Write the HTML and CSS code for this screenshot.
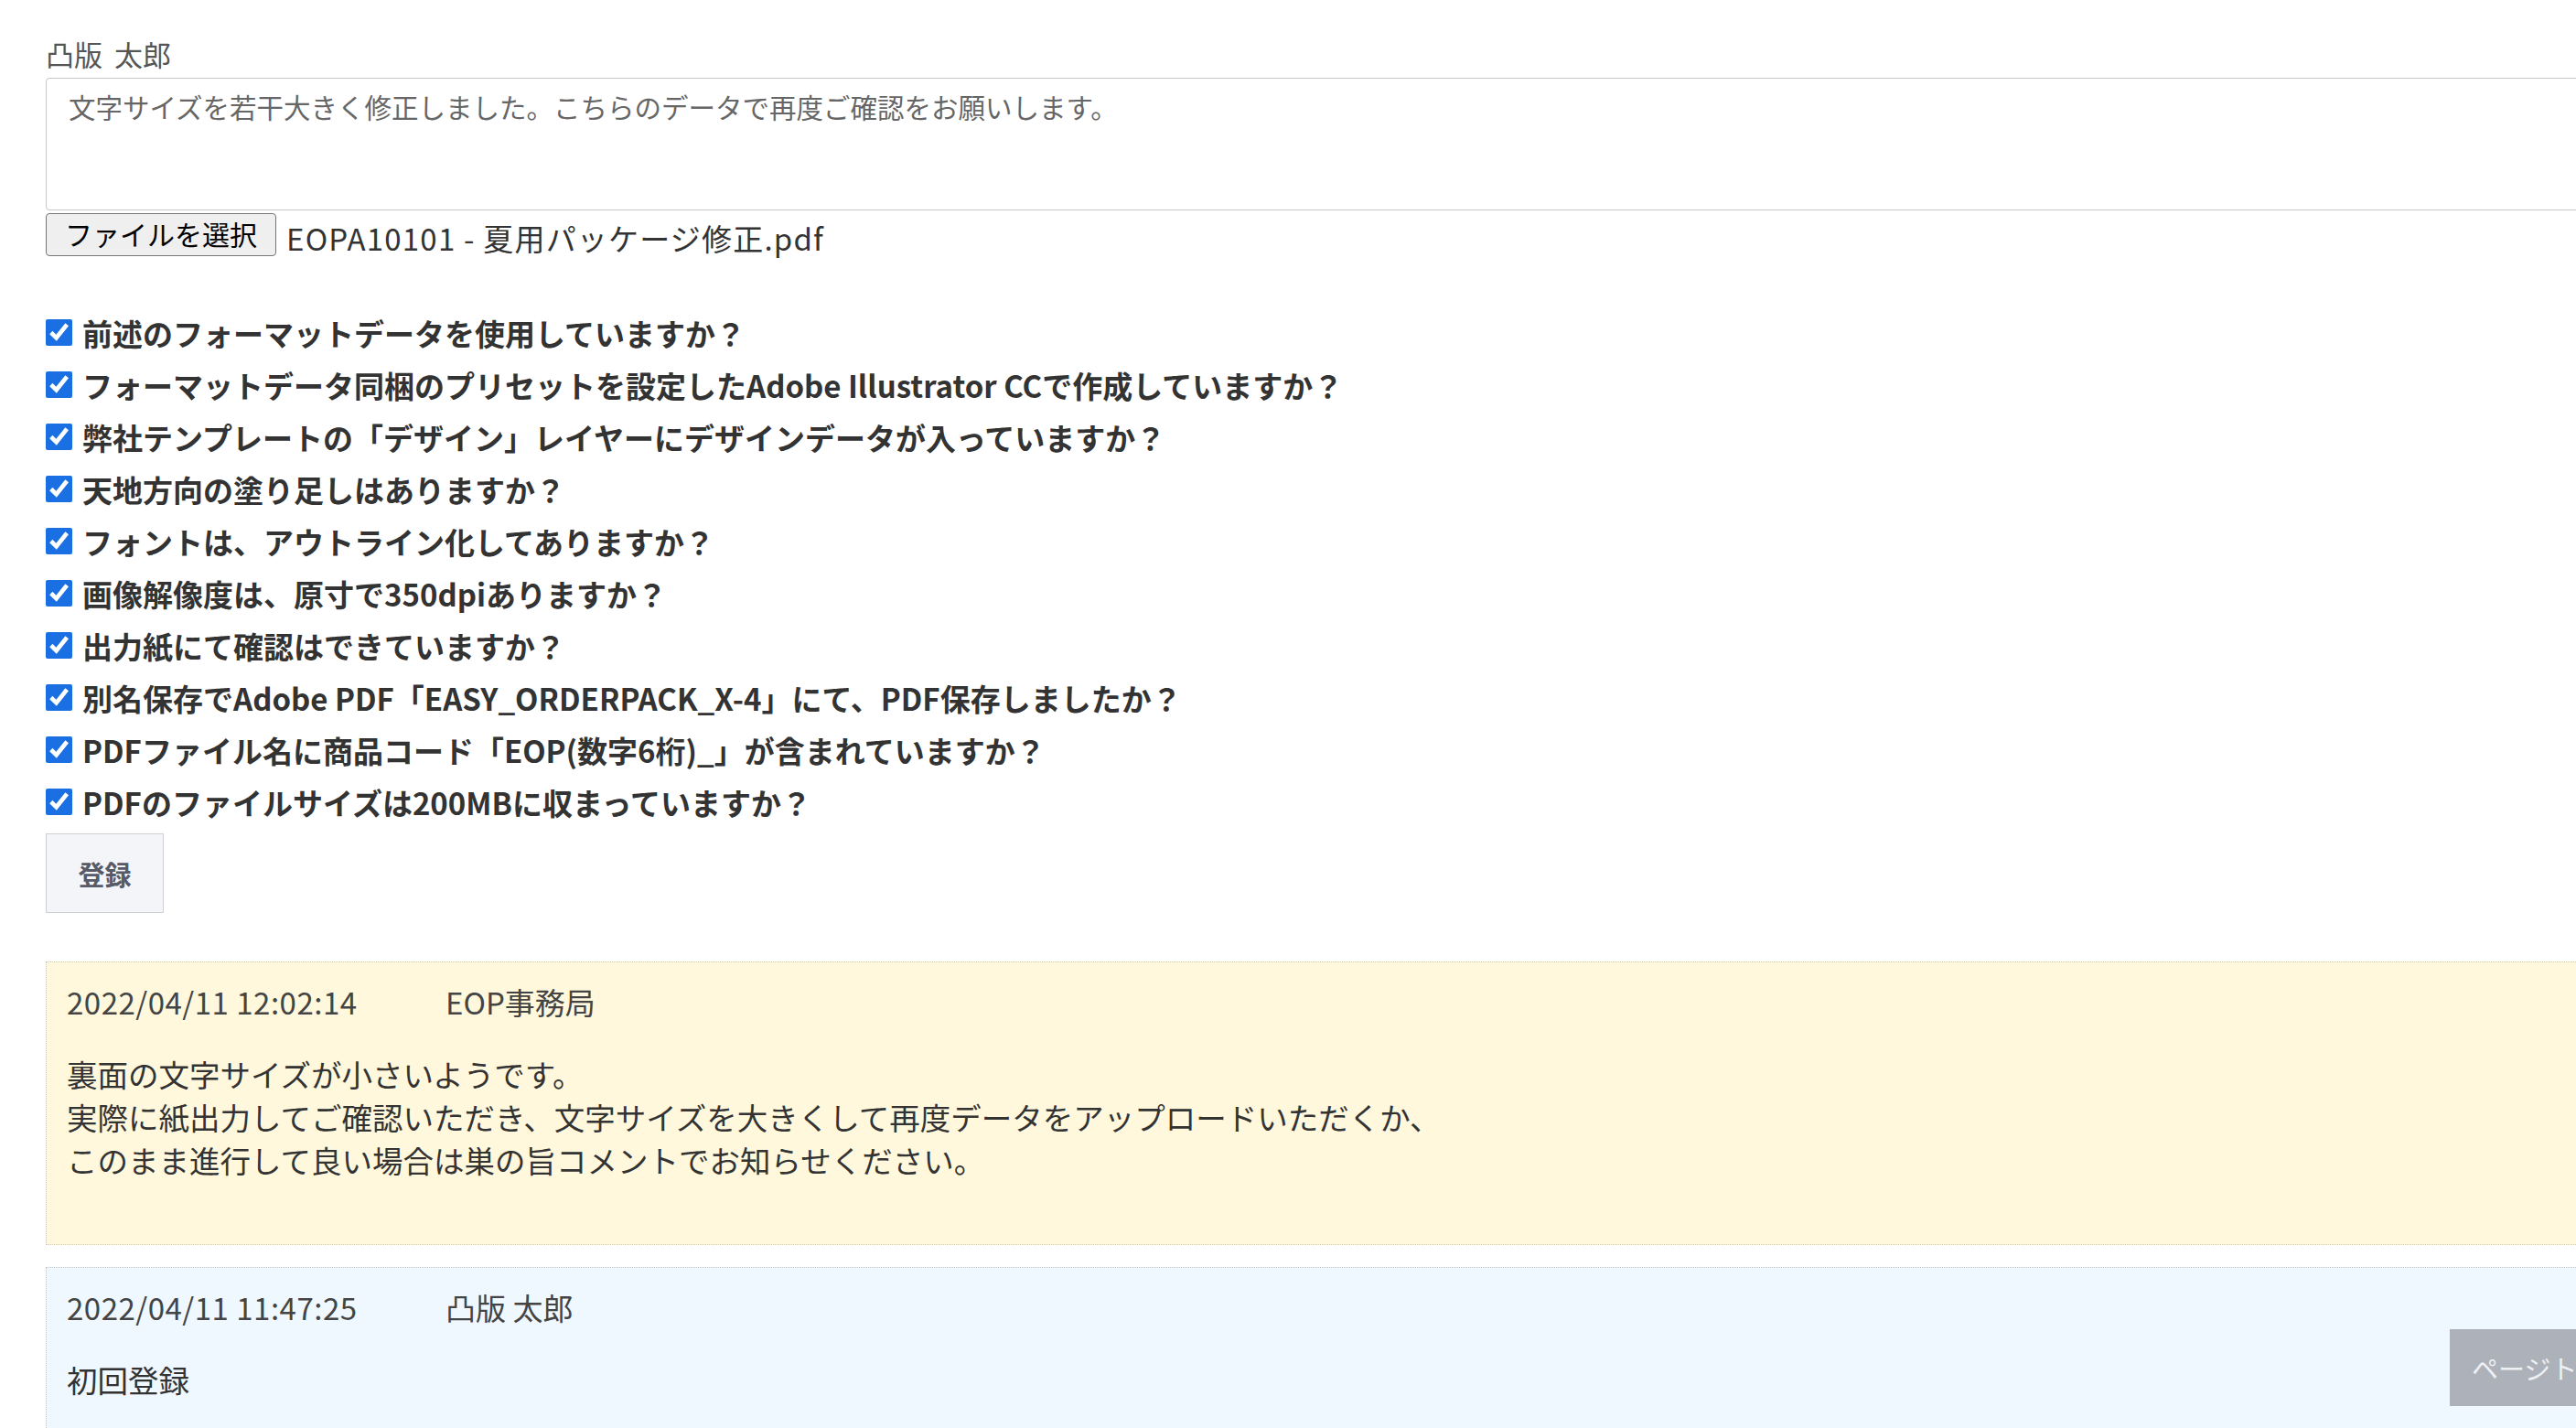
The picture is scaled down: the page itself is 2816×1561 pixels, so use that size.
FILE: index.html
```html
<!DOCTYPE html>
<html lang="ja">
<head>
<meta charset="utf-8">
<title>コメント</title>
<link rel="stylesheet" href="styles.css">
</head>
<body>
<div class="page">
  <div class="poster">凸版 太郎</div>
  <div class="textarea">文字サイズを若干大きく修正しました。こちらのデータで再度ご確認をお願いします。</div>
  <div class="file-row">
    <span class="file-btn">ファイルを選択</span>
    <span class="file-name">EOPA10101 - 夏用パッケージ修正.pdf</span>
  </div>

  <ul class="checks">
    <li><input type="checkbox" checked><span>前述のフォーマットデータを使用していますか？</span></li>
    <li><input type="checkbox" checked><span>フォーマットデータ同梱のプリセットを設定したAdobe Illustrator CCで作成していますか？</span></li>
    <li><input type="checkbox" checked><span>弊社テンプレートの「デザイン」レイヤーにデザインデータが入っていますか？</span></li>
    <li><input type="checkbox" checked><span>天地方向の塗り足しはありますか？</span></li>
    <li><input type="checkbox" checked><span>フォントは、アウトライン化してありますか？</span></li>
    <li><input type="checkbox" checked><span>画像解像度は、原寸で350dpiありますか？</span></li>
    <li><input type="checkbox" checked><span>出力紙にて確認はできていますか？</span></li>
    <li><input type="checkbox" checked><span>別名保存でAdobe PDF「EASY_ORDERPACK_X-4」にて、PDF保存しましたか？</span></li>
    <li><input type="checkbox" checked><span>PDFファイル名に商品コード「EOP(数字6桁)_」が含まれていますか？</span></li>
    <li><input type="checkbox" checked><span>PDFのファイルサイズは200MBに収まっていますか？</span></li>
  </ul>

  <button class="submit" type="button">登録</button>

  <div class="comment comment-staff">
    <div class="meta"><span class="date">2022/04/11 12:02:14</span><span class="name">EOP事務局</span></div>
    <div class="body">裏面の文字サイズが小さいようです。<br>実際に紙出力してご確認いただき、文字サイズを大きくして再度データをアップロードいただくか、<br>このまま進行して良い場合は巣の旨コメントでお知らせください。</div>
  </div>

  <div class="comment comment-user">
    <div class="meta"><span class="date">2022/04/11 11:47:25</span><span class="name">凸版 太郎</span></div>
    <div class="body">初回登録</div>
  </div>
</div>
<a class="pagetop" href="#">ページトップ</a>
</body>
</html>
```

FILE: styles.css
```css
html, body {
  margin: 0;
  padding: 0;
  background: #ffffff;
  overflow: hidden;
}

body {
  width: 2816px;
  height: 1561px;
  font-family: "Noto Sans CJK JP", "Noto Sans", sans-serif;
  color: #333333;
}

.page {
  width: 3100px;
  padding: 38px 0 0 50px;
  box-sizing: border-box;
}

.poster {
  font-size: 31px;
  line-height: 42px;
  height: 47px;
  color: #555555;
  word-spacing: 6px;
}

.textarea {
  box-sizing: border-box;
  height: 145px;
  border: 1px solid #c6c6c6;
  border-radius: 4px;
  padding: 9px 24px;
  font-size: 29.5px;
  line-height: 42px;
  color: #666666;
}

.file-row {
  display: flex;
  align-items: center;
  margin-top: 3px;
  height: 47px;
}

.file-btn {
  box-sizing: border-box;
  height: 47px;
  width: 252px;
  display: flex;
  align-items: center;
  justify-content: center;
  padding-bottom: 3px;
  background: #efefef;
  border: 1px solid #767676;
  border-radius: 4px;
  font-size: 30px;
  color: #000000;
}

.file-name {
  margin-left: 11px;
  font-size: 33px;
  letter-spacing: 1.2px;
  color: #333333;
  padding-top: 6px;
}

.checks {
  list-style: none;
  margin: 55px 0 0 0;
  padding: 0;
}

.checks li {
  display: flex;
  align-items: center;
  height: 57px;
  font-size: 33px;
  font-weight: 700;
  color: #333333;
}

.checks input {
  width: 29px;
  height: 29px;
  margin: 0 11px 0 0;
  accent-color: #1a6fe3;
  flex: none;
}

.submit {
  display: block;
  box-sizing: border-box;
  width: 129px;
  height: 87px;
  margin-top: 6px;
  padding: 0;
  background: #f4f5f8;
  border: 1px solid #cfd0d3;
  border-radius: 0;
  font-family: inherit;
  font-size: 29px;
  font-weight: 700;
  color: #575b69;
}

.comment {
  box-sizing: border-box;
  border: 1px dotted #c8c8c8;
  padding: 20px 24px 0 22px;
}

.comment-staff {
  margin-top: 53px;
  height: 310px;
  background: #fff8dc;
}

.comment-user {
  margin-top: 24px;
  height: 320px;
  background: #f0f8ff;
}

.meta {
  display: flex;
  font-size: 33px;
  line-height: 47px;
  color: #444444;
}

.date {
  width: 414px;
  flex: none;
  letter-spacing: 0.5px;
}

.body {
  margin-top: 31px;
  font-size: 33.5px;
  line-height: 47px;
  color: #333333;
}

.pagetop {
  position: fixed;
  left: 2678px;
  top: 1453px;
  height: 84px;
  padding: 0 24px;
  line-height: 84px;
  background: #adb2ba;
  color: #eef0f3;
  font-size: 29px;
  text-decoration: none;
  white-space: nowrap;
}
```
